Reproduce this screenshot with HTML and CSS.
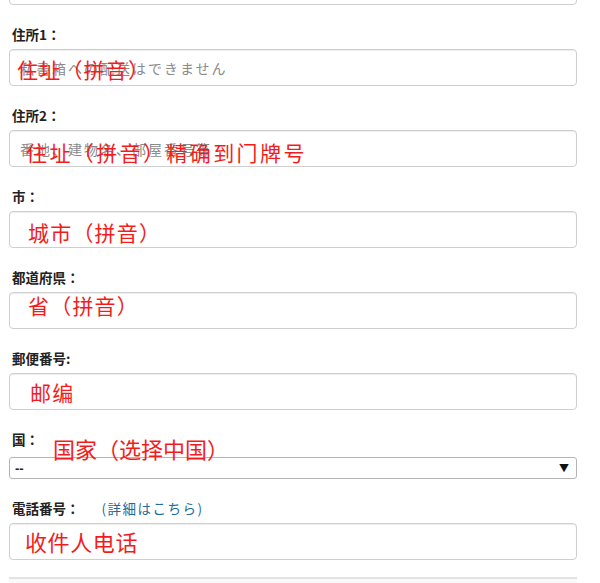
FILE: index.html
```html
<!DOCTYPE html>
<html>

<head>
  <meta charset="utf-8">
  <meta name="viewport" content="width=device-width, initial-scale=1.0">
  <link rel="stylesheet" href="styles.css">
</head>

<body>
  <form class="住所表单">
    <!-- 上一个输入框，只露出底边 -->
    <div class="字段 字段-截断">
      <input class="文本框" type="text">
    </div>

    <div class="字段">
      <label class="字段名">住所1：</label>
      <input class="文本框" type="text" placeholder="私書箱への配送はできません">
      <span class="批注 批注-住所1">住址（拼音）</span>
    </div>

    <div class="字段">
      <label class="字段名">住所2：</label>
      <input class="文本框" type="text" placeholder="番地、建物名、部屋番号等">
      <span class="批注 批注-住所2">住址（拼音）精确到门牌号</span>
    </div>

    <div class="字段">
      <label class="字段名">市：</label>
      <input class="文本框" type="text">
      <span class="批注 批注-市">城市（拼音）</span>
    </div>

    <div class="字段">
      <label class="字段名">都道府県：</label>
      <input class="文本框" type="text">
      <span class="批注 批注-省">省（拼音）</span>
    </div>

    <div class="字段">
      <label class="字段名">郵便番号:</label>
      <input class="文本框" type="text">
      <span class="批注 批注-邮编">邮编</span>
    </div>

    <div class="字段 字段-国">
      <label class="字段名">国：</label>
      <div class="下拉框">
        <select class="下拉">
          <option>--</option>
        </select>
      </div>
      <span class="批注 批注-国家">国家（选择中国）</span>
    </div>

    <div class="字段">
      <label class="字段名">電話番号：<a class="详情链接" href="#">(詳細はこちら)</a></label>
      <input class="文本框" type="text">
      <span class="批注 批注-电话">收件人电话</span>
    </div>

    <div class="下一栏"></div>
  </form>
</body>

</html>
```

FILE: styles.css
```css
/* 基础 */
body {
  margin: 0;
  background: #fff;
  font-family: "Noto Sans CJK JP", "Noto Sans", sans-serif;
  color: #333;
  overflow: hidden;
}

.住所表单 {
  width: 568px;
  padding-left: 9px;
}

/* 每一行字段 */
.字段 {
  position: relative;
  margin-bottom: 19px;
}

.字段-截断 {
  margin-top: -32px;
}

.字段名 {
  display: block;
  height: 20px;
  margin: 0 0 5px 3px;
  font-size: 13.5px;
  line-height: 20px;
  font-weight: bold;
  color: #222;
}

/* 国 这一行的下拉框离标题稍远 */
.字段-国 .字段名 {
  margin-bottom: 8px;
}

.详情链接 {
  margin-left: 22px;
  font-size: 13.5px;
  font-weight: normal;
  color: #236a9c;
  text-decoration: none;
  letter-spacing: 1.5px;
}

/* 输入框 */
.文本框 {
  display: block;
  width: 100%;
  height: 37px;
  box-sizing: border-box;
  margin: 0;
  padding: 0 10px;
  border: 1px solid #cfcfcf;
  border-radius: 4px;
  background: #fff;
  box-shadow: inset 0 1px 1px rgba(0, 0, 0, 0.075);
  font-family: "Noto Sans CJK JP", sans-serif;
  font-size: 14px;
}

.文本框::placeholder {
  color: #8a8a8a;
  letter-spacing: 2px;
}

/* 下拉框 */
.下拉框 {
  position: relative;
  height: 22px;
}

.下拉 {
  display: block;
  width: 100%;
  height: 22px;
  box-sizing: border-box;
  margin: 0;
  padding: 0 0 0 5px;
  border: 1px solid #b5b5b5;
  border-radius: 3px;
  background: #fff;
  appearance: none;
  -webkit-appearance: none;
  font-family: "Liberation Sans", sans-serif;
  font-size: 13px;
  font-weight: bold;
  color: #222;
}

.下拉框::after {
  content: "▼";
  position: absolute;
  right: 8px;
  top: 4px;
  font-size: 10px;
  line-height: 14px;
  color: #111;
  pointer-events: none;
}

/* 红色批注 - 盖在截图上的说明文字 */
.批注 {
  position: absolute;
  font-family: "Noto Sans CJK SC", sans-serif;
  font-size: 21px;
  line-height: 1;
  letter-spacing: 1.2px;
  color: #f31c1c;
  white-space: nowrap;
  pointer-events: none;
}

.批注-住所1 {
  left: 8px;
  top: 35px;
}

.批注-住所2 {
  left: 17px;
  top: 37px;
  letter-spacing: 2.4px;
}

.批注-市 {
  left: 19px;
  top: 36px;
}

.批注-省 {
  left: 19px;
  top: 28px;
}

.批注-邮编 {
  left: 21px;
  top: 34px;
}

.批注-国家 {
  left: 44px;
  top: 8px;
  font-size: 22px;
  letter-spacing: 0;
}

.批注-电话 {
  left: 16px;
  top: 32px;
  font-size: 22px;
  letter-spacing: 0.6px;
}

/* 底部下一栏的顶边 */
.下一栏 {
  height: 20px;
  margin-top: -2px;
  border-top: 2px solid #e2e2e2;
  background: #f9f9f9;
}
```
